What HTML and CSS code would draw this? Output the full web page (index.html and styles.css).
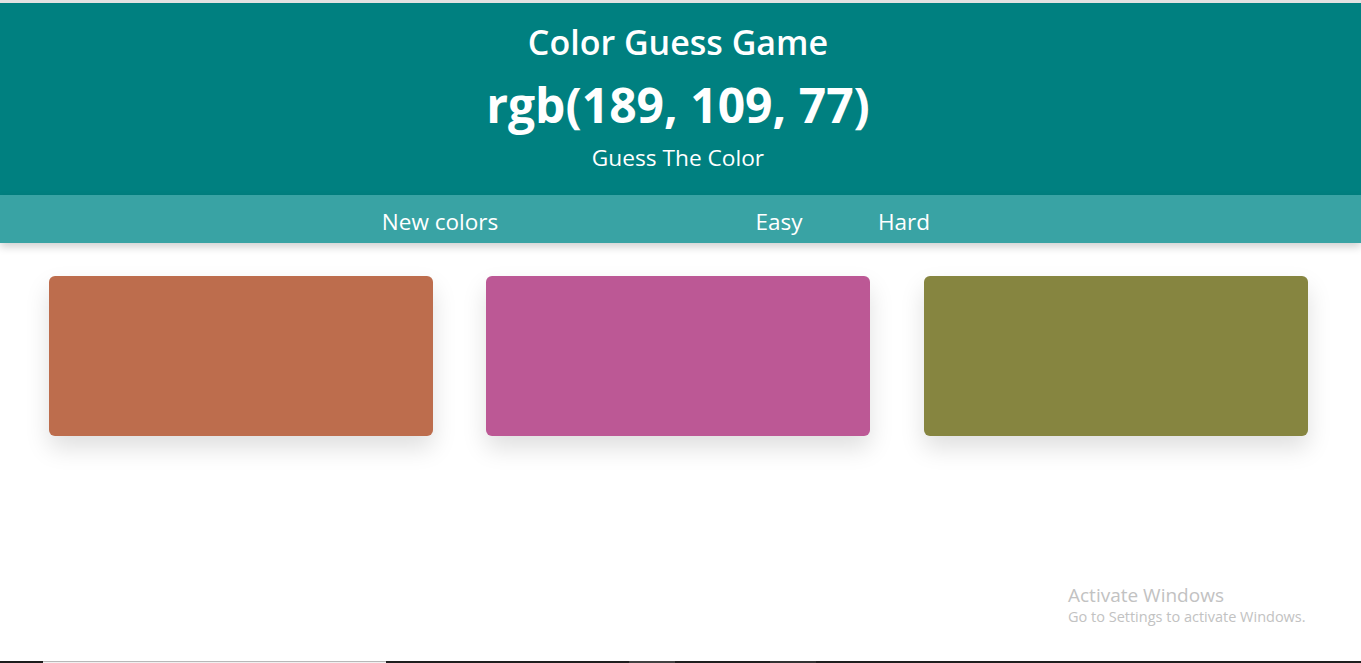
FILE: index.html
```html
<!DOCTYPE html>
<html lang="en">
<head>
<meta charset="utf-8">
<title>Color Guess Game</title>
<link rel="stylesheet" href="styles.css">
</head>
<body>
<div class="chrome-top"></div>
<header class="header">
  <h1 class="title">Color Guess Game</h1>
  <div class="rgb">rgb(189, 109, 77)</div>
  <div class="subtitle">Guess The Color</div>
</header>
<nav class="stripe">
  <button class="btn btn-reset">New colors</button>
  <span class="message"></span>
  <button class="btn btn-mode">Easy</button>
  <button class="btn btn-mode">Hard</button>
</nav>
<main class="squares">
  <div class="square" style="background: rgb(189, 109, 77)"></div>
  <div class="square" style="background: rgb(188, 88, 149)"></div>
  <div class="square" style="background: rgb(134, 133, 64)"></div>
</main>
<div class="watermark">
  <div class="wm-title">Activate Windows</div>
  <div class="wm-sub">Go to Settings to activate Windows.</div>
</div>
<div class="taskbar">
  <span class="tb tb-a"></span>
  <span class="tb tb-b"></span>
  <span class="tb tb-c"></span>
  <span class="tb tb-d"></span>
  <span class="tb tb-c2"></span>
  <span class="tb tb-e"></span>
  <span class="tb tb-f"></span>
</div>
</body>
</html>
```
FILE: styles.css
```css
html, body {
  margin: 0;
  padding: 0;
  background: #ffffff;
  height: 100%;
  overflow: hidden;
}
body {
  font-family: "Open Sans", "Noto Sans", sans-serif;
  color: #ffffff;
  position: relative;
}
.chrome-top {
  height: 3px;
  background: #e2e2e2;
}
.header {
  background: #008080;
  text-align: center;
  padding: 19px 5px 23px 0;
}
.title {
  margin: 0;
  font-size: 34px;
  font-weight: 600;
  line-height: 40px;
}
.rgb {
  margin-top: 15px;
  font-size: 48px;
  font-weight: 700;
  line-height: 56px;
}
.subtitle {
  margin-top: 11px;
  font-size: 22.7px;
  font-weight: 400;
  line-height: 28px;
}
.stripe {
  display: flex;
  align-items: center;
  height: 48px;
  padding-left: 360px;
  background: #39a3a4;
  box-shadow: 0 4px 8px rgba(0, 0, 0, 0.18);
  position: relative;
}
.btn {
  background: none;
  border: 0;
  padding: 6px 0 0;
  margin: 0;
  color: #ffffff;
  font-family: "Open Sans", "Noto Sans", sans-serif;
  font-size: 22.5px;
  line-height: 42px;
  text-align: center;
  cursor: pointer;
}
.btn-reset {
  width: 160px;
}
.message {
  width: 219px;
}
.btn-mode {
  width: 80px;
}
.btn-mode + .btn-mode {
  margin-left: 45px;
}
.squares {
  display: flex;
  gap: 53px;
  padding: 33px 0 0 49px;
}
.square {
  width: 384px;
  height: 160px;
  flex: none;
  border-radius: 6px;
  box-shadow: 0 12px 24px rgba(0, 0, 0, 0.13);
}
.square:last-child {
  margin-left: 1px;
}
.watermark {
  position: absolute;
  left: 1068px;
  top: 583px;
  color: #c2c2c2;
}
.wm-title {
  font-size: 19px;
  line-height: 24px;
}
.wm-sub {
  font-size: 14.5px;
  line-height: 20px;
}
.taskbar {
  position: absolute;
  left: 0;
  right: 0;
  bottom: 0;
  height: 2px;
  display: flex;
}
.tb {
  display: block;
  height: 2px;
}
.tb-a { width: 43px; background: #1c1c1c; }
.tb-b { width: 343px; background: #f0f0f0; border-top: 1px solid #b8b8b8; height: 1px; }
.tb-c { width: 243px; background: #1f1f1f; }
.tb-d { width: 46px; background: #424242; }
.tb-c2 { width: 95px; background: #1f1f1f; }
.tb-e { width: 46px; background: #333333; }
.tb-f { flex: 1; background: #1f1f1f; }
```
